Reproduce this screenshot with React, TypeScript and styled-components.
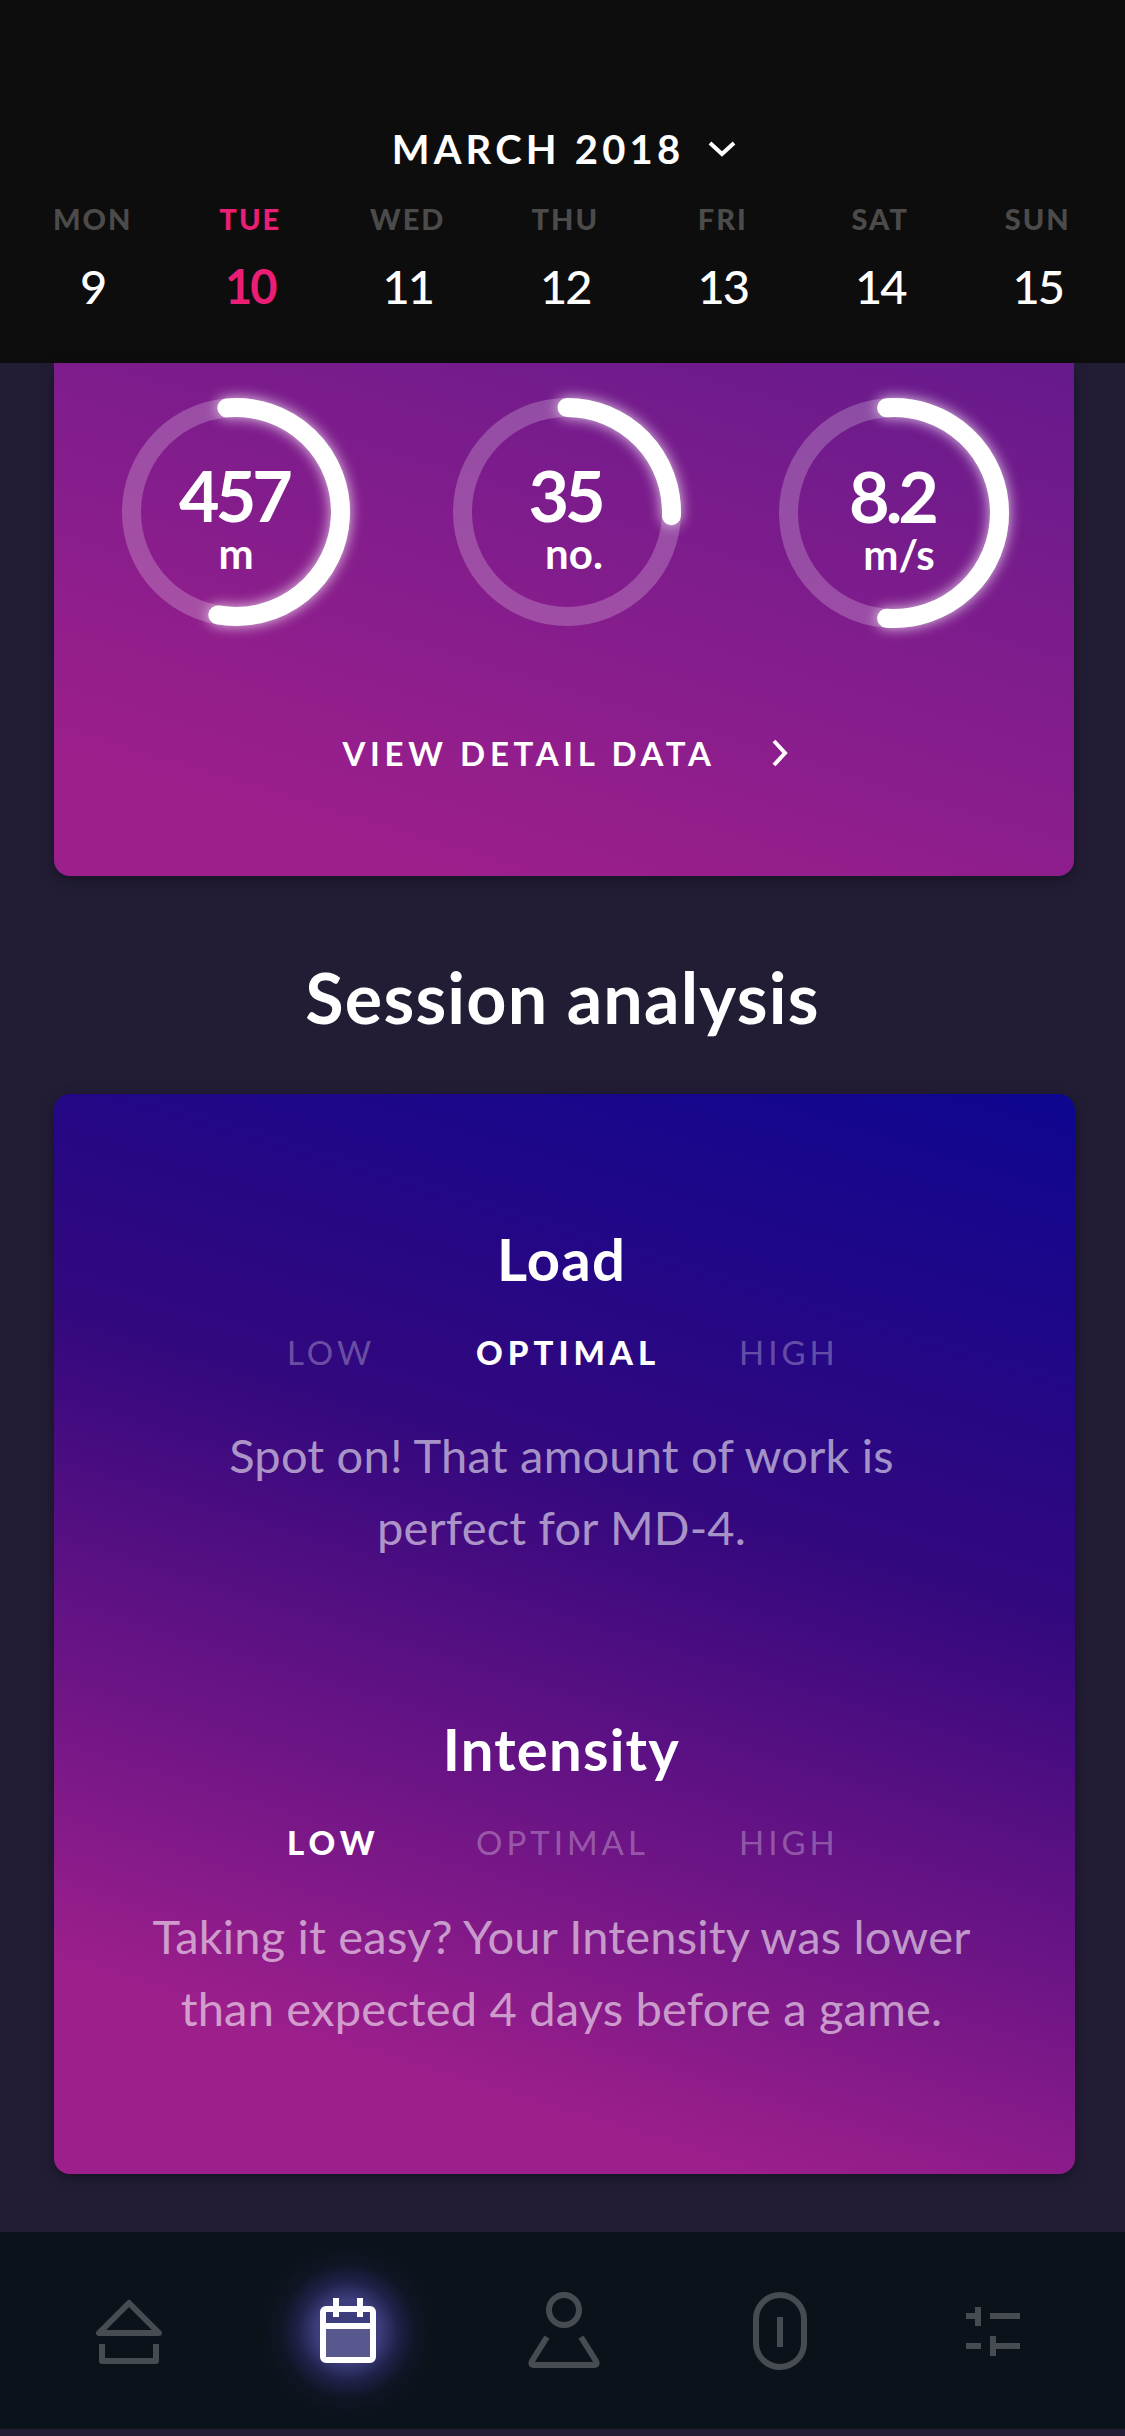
import React from 'react';
import styled, { createGlobalStyle } from 'styled-components';

const FONT = `Lato, 'Open Sans', sans-serif`;

const days = [
  { label: 'MON', date: 9 },
  { label: 'TUE', date: 10, active: true },
  { label: 'WED', date: 11 },
  { label: 'THU', date: 12 },
  { label: 'FRI', date: 13 },
  { label: 'SAT', date: 14 },
  { label: 'SUN', date: 15 },
];

const rings = [
  { value: '457', unit: 'm', from: -5, to: 190, size: 228, gap: 0, unitShift: 0 },
  { value: '35', unit: 'no.', from: 0, to: 92, size: 228, gap: 103, unitShift: 7 },
  { value: '8.2', unit: 'm/s', from: -4, to: 184, size: 230, gap: 98, unitShift: 5 },
];

const point = (r: number, deg: number) => {
  const a = ((deg - 90) * Math.PI) / 180;
  return `${(r * Math.cos(a)).toFixed(2)} ${(r * Math.sin(a)).toFixed(2)}`;
};

const Ring: React.FC<{ from: number; to: number; size: number }> = ({ from, to, size }) => {
  const r = size / 2 - 9.5;
  const large = to - from > 180 ? 1 : 0;
  return (
    <RingSvg width={size + 40} height={size + 40} viewBox={`${-size / 2 - 20} ${-size / 2 - 20} ${size + 40} ${size + 40}`}>
      <circle r={r} fill="none" stroke="rgba(255,255,255,0.22)" strokeWidth="19" />
      <RingArc d={`M${point(r, from)} A${r} ${r} 0 ${large} 1 ${point(r, to)}`} />
    </RingSvg>
  );
};

const App: React.FC = () => (
  <Page>
    <GlobalStyle />
    <Header>
      <MonthRow>
        <MonthLabel>MARCH 2018</MonthLabel>
        <svg width="30" height="18" viewBox="0 0 30 18">
          <path d="M3 3 L15 14 L27 3" fill="none" stroke="#fff" strokeWidth="4" />
        </svg>
      </MonthRow>
      <DayGrid>
        {days.map((d) => (
          <Day key={d.label}>
            <DayLabel $active={d.active}>{d.label}</DayLabel>
            <DayDate $active={d.active}>{d.date}</DayDate>
          </Day>
        ))}
      </DayGrid>
    </Header>

    <StatsCard>
      <RingRow>
        {rings.map((r) => (
          <RingItem key={r.value} $size={r.size} $gap={r.gap}>
            <Ring from={r.from} to={r.to} size={r.size} />
            <RingText>
              <RingValue>{r.value}</RingValue>
              <RingUnit $shift={r.unitShift}>{r.unit}</RingUnit>
            </RingText>
          </RingItem>
        ))}
      </RingRow>
      <DetailLink>
        <span>VIEW DETAIL DATA</span>
        <svg width="20" height="30" viewBox="0 0 20 30">
          <path d="M4 3 L15 15 L4 27" fill="none" stroke="#fff" strokeWidth="4" />
        </svg>
      </DetailLink>
    </StatsCard>

    <SectionTitle>Session analysis</SectionTitle>

    <AnalysisCard>
      <Metric>
        <MetricTitle>Load</MetricTitle>
        <Levels>
          <Level>LOW</Level>
          <Level $active>OPTIMAL</Level>
          <Level>HIGH</Level>
        </Levels>
        <MetricText $gap={46}>
          Spot on! That amount of work is
          <br />
          perfect for MD-4.
        </MetricText>
      </Metric>
      <Metric>
        <MetricTitle>Intensity</MetricTitle>
        <Levels>
          <Level $active>LOW</Level>
          <Level>OPTIMAL</Level>
          <Level>HIGH</Level>
        </Levels>
        <MetricText $gap={37}>
          Taking it easy? Your Intensity was lower
          <br />
          than expected 4 days before a game.
        </MetricText>
      </Metric>
    </AnalysisCard>

    <TabBar>
      <Tab>
        <TabIcon viewBox="0 0 100 100">
          <path d="M50 22 L20 52 H80 Z" strokeLinejoin="round" />
          <path d="M23 63 V80 H77 V63" strokeLinejoin="round" />
        </TabIcon>
      </Tab>
      <Tab>
        <TabGlow />
        <TabIcon viewBox="-3 0 100 100" $active>
          <rect x="25" y="45" width="50" height="34" fill="rgba(255,255,255,0.14)" stroke="none" />
          <rect x="25" y="28" width="50" height="51" rx="3" />
          <path d="M25 45 H75 M38 17 V36 M62 17 V36" />
        </TabIcon>
      </Tab>
      <Tab>
        <TabIcon viewBox="-3 0 100 100">
          <circle cx="50" cy="29" r="15" />
          <path d="M33 56 L18 80 Q16 84 20 84 H80 Q84 84 82 80 L67 56" strokeLinejoin="round" />
        </TabIcon>
      </Tab>
      <Tab>
        <TabIcon viewBox="-3 0 100 100">
          <rect x="26" y="14" width="48" height="72" rx="24" />
          <path d="M50 36 V66" />
        </TabIcon>
      </Tab>
      <Tab>
        <TabIcon viewBox="0 0 100 100">
          <path d="M23 35 H33 M35 26 V45 M47 35 H77 M23 65 H38 M50 55 V75 M50 65 H77" />
        </TabIcon>
      </Tab>
    </TabBar>
  </Page>
);

const GlobalStyle = createGlobalStyle`
  html, body {
    margin: 0;
    padding: 0;
    background: #221d35;
  }
`;

const Page = styled.div`
  width: 1125px;
  height: 2436px;
  overflow: hidden;
  display: flex;
  flex-direction: column;
  background: #221d35;
  font-family: ${FONT};
  color: #fff;
`;

const Header = styled.header`
  height: 363px;
  box-sizing: border-box;
  padding-top: 125px;
  background: #0d0d0d;
`;

const MonthRow = styled.div`
  display: flex;
  align-items: center;
  justify-content: center;
  gap: 23px;
  height: 48px;
  padding-left: 4px;
`;

const MonthLabel = styled.span`
  font-size: 40px;
  font-weight: 700;
  letter-spacing: 4.2px;
`;

const DayGrid = styled.div`
  display: grid;
  grid-template-columns: repeat(7, 157.5px);
  padding: 0 14px;
  margin-top: 28px;
`;

const Day = styled.div`
  display: flex;
  flex-direction: column;
  align-items: center;
`;

const DayLabel = styled.span<{ $active?: boolean }>`
  font-size: 29px;
  font-weight: 900;
  line-height: 36px;
  letter-spacing: 2px;
  color: ${({ $active }) => ($active ? '#e91e74' : '#4b4b4b')};
`;

const DayDate = styled.span<{ $active?: boolean }>`
  font-size: 47px;
  font-weight: ${({ $active }) => ($active ? 700 : 500)};
  line-height: 56px;
  letter-spacing: -2px;
  margin-top: 21px;
  color: ${({ $active }) => ($active ? '#e91e74' : '#fff')};
`;

const StatsCard = styled.section`
  height: 513px;
  margin: 0 51px 0 54px;
  border-radius: 0 0 16px 16px;
  background: linear-gradient(197deg, #661a8c 0%, #9c1f8c 85%);
  box-shadow: 0 4px 14px rgba(0, 0, 0, 0.35);
  display: flex;
  flex-direction: column;
  align-items: stretch;
`;

const RingRow = styled.div`
  display: flex;
  padding: 35px 0 0 68px;
`;

const RingItem = styled.div<{ $size: number; $gap: number }>`
  display: grid;
  place-items: center;
  width: ${({ $size }) => $size}px;
  height: ${({ $size }) => $size}px;
  margin-left: ${({ $gap }) => $gap}px;
`;

const RingSvg = styled.svg`
  grid-area: 1 / 1;
  margin: -20px;
`;

const RingArc = styled.path`
  fill: none;
  stroke: #fff;
  stroke-width: 19;
  stroke-linecap: round;
  filter: drop-shadow(0 0 7px rgba(255, 255, 255, 0.8));
`;

const RingText = styled.div`
  grid-area: 1 / 1;
  z-index: 1;
  display: flex;
  flex-direction: column;
  align-items: center;
  padding-top: 14px;
`;

const RingValue = styled.span`
  font-size: 70px;
  font-weight: 700;
  line-height: 64px;
  letter-spacing: -4px;
  margin-left: -4px;
`;

const RingUnit = styled.span<{ $shift: number }>`
  font-size: 42px;
  font-weight: 700;
  line-height: 44px;
  margin-top: 4px;
  margin-left: ${({ $shift }) => $shift * 2}px;
`;

const DetailLink = styled.div`
  display: flex;
  align-items: center;
  justify-content: center;
  gap: 54px;
  margin-top: 105px;
  padding-left: 4px;
  font-size: 33px;
  font-weight: 700;
  letter-spacing: 4.7px;
`;

const SectionTitle = styled.h2`
  margin: 85px 0 0;
  font-size: 70px;
  font-weight: 700;
  line-height: 72px;
  letter-spacing: 1.2px;
  text-align: center;
`;

const AnalysisCard = styled.section`
  height: 1080px;
  box-sizing: border-box;
  margin: 61px 50px 0 54px;
  padding-top: 130px;
  border-radius: 16px;
  background: linear-gradient(197deg, #0e0690 0%, #33087e 38%, #9c1f8c 85%);
  box-shadow: 0 4px 14px rgba(0, 0, 0, 0.35);
  display: flex;
  flex-direction: column;
  gap: 151px;
`;

const Metric = styled.div`
  display: flex;
  flex-direction: column;
  align-items: center;
  padding-right: 6px;
`;

const MetricTitle = styled.h3`
  margin: 0;
  font-size: 58px;
  font-weight: 700;
  line-height: 70px;
  letter-spacing: 1.2px;
`;

const Levels = styled.div`
  align-self: stretch;
  display: grid;
  grid-template-columns: 189px 263px auto;
  padding-left: 233px;
  margin-top: 37px;
`;

const Level = styled.span<{ $active?: boolean }>`
  font-size: 33px;
  line-height: 42px;
  letter-spacing: ${({ $active }) => ($active ? 5 : 4)}px;
  font-weight: ${({ $active }) => ($active ? 900 : 400)};
  color: ${({ $active }) => ($active ? '#fff' : 'rgba(255,255,255,0.3)')};
`;

const MetricText = styled.p<{ $gap: number }>`
  margin: ${({ $gap }) => $gap}px 0 0;
  font-size: 47px;
  line-height: 72px;
  letter-spacing: 0.2px;
  text-align: center;
  color: rgba(255, 255, 255, 0.58);
`;

const TabBar = styled.nav`
  height: 197px;
  margin-top: 58px;
  background: #0c1219;
  display: grid;
  grid-template-columns: repeat(5, 216px);
  padding-left: 21px;
`;

const Tab = styled.div`
  position: relative;
  display: flex;
  align-items: center;
  justify-content: center;
`;

const TabGlow = styled.div`
  position: absolute;
  left: 21px;
  width: 180px;
  height: 180px;
  border-radius: 50%;
  background: radial-gradient(closest-side, rgba(66, 66, 135, 0.9) 35%, rgba(44, 44, 105, 0.6) 55%, rgba(24, 28, 62, 0.3) 75%, rgba(12, 18, 25, 0) 100%);
`;

const TabIcon = styled.svg<{ $active?: boolean }>`
  position: relative;
  width: 100px;
  height: 100px;
  fill: none;
  stroke: ${({ $active }) => ($active ? '#fff' : '#474c53')};
  stroke-width: 6;
`;

export default App;
